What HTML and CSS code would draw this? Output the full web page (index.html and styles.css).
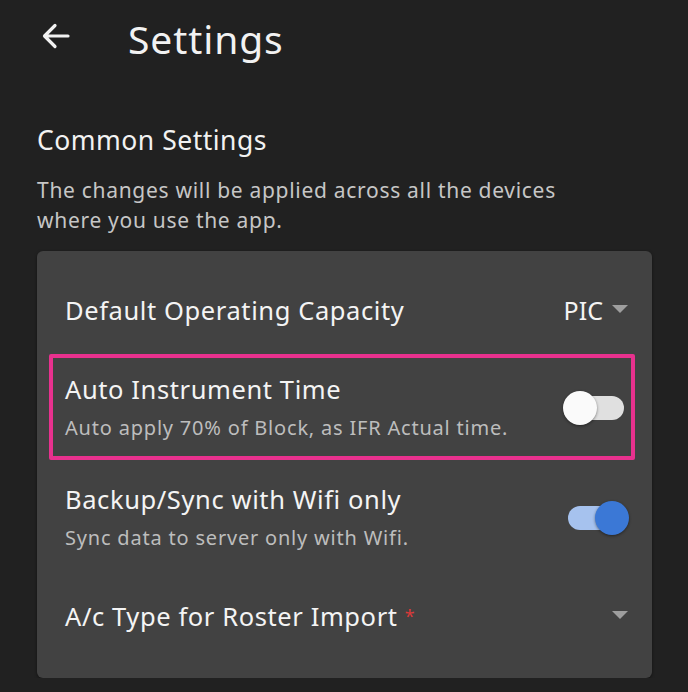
FILE: index.html
```html
<!DOCTYPE html>
<html lang="en">

<head>
    <meta charset="UTF-8">
    <meta name="viewport" content="width=device-width, initial-scale=1.0">
    <title>Settings</title>
    <link rel="stylesheet" href="styles.css">
</head>

<body>

    <!-- Top Bar -->
    <div class="top-bar">
        <svg class="back-icon" width="28" height="26" viewBox="0 0 28 26">
            <path d="M26 13 H3 M13 2.5 L2.5 13 L13 23.5" fill="none" stroke="#f2f2f2" stroke-width="3.2" stroke-linecap="round" stroke-linejoin="round"/>
        </svg>
        <h1>Settings</h1>
    </div>

    <!-- Common Settings -->
    <div class="section">
        <h2>Common Settings</h2>
        <p class="section-note">The changes will be applied across all the devices where you use the app.</p>

        <div class="card">
            <div class="row row-first">
                <span class="row-title">Default Operating Capacity</span>
                <span class="select">PIC <span class="caret"></span></span>
            </div>

            <div class="row row-highlight">
                <div class="row-text">
                    <div class="row-title">Auto Instrument Time</div>
                    <div class="row-sub">Auto apply 70% of Block, as IFR Actual time.</div>
                </div>
                <span class="toggle"><span class="knob"></span></span>
            </div>

            <div class="row row-sync">
                <div class="row-text">
                    <div class="row-title">Backup/Sync with Wifi only</div>
                    <div class="row-sub">Sync data to server only with Wifi.</div>
                </div>
                <span class="toggle on"><span class="knob"></span></span>
            </div>

            <div class="row row-last">
                <span class="row-title">A/c Type for Roster Import <span class="required">*</span></span>
                <span class="select"><span class="caret"></span></span>
            </div>
        </div>
    </div>

</body>

</html>
```

FILE: styles.css
```css
body {
    font-family: "Noto Sans", "Open Sans", sans-serif;
    background-color: #212121;
    color: #f2f2f2;
    margin: 0;
    padding: 0;
}

/* Top Bar */
.top-bar {
    display: flex;
    align-items: center;
    height: 78px;
    padding-left: 42px;
}

.back-icon {
    margin-top: -6px;
}

.top-bar h1 {
    margin: -2px 0 0 58px;
    font-size: 39px;
    font-weight: normal;
    letter-spacing: 0.9px;
    line-height: 1;
}

/* Section */
.section {
    padding: 42px 36px 0 37px;
}

.section h2 {
    margin: 0;
    font-size: 26.5px;
    font-weight: normal;
    letter-spacing: 0.5px;
    line-height: 40px;
}

.section-note {
    max-width: 570px;
    margin: 15px 0 16px;
    font-size: 21px;
    letter-spacing: 0.7px;
    line-height: 30px;
    color: #c6c6c6;
}

.card {
    background: #424242;
    border-radius: 6px;
    padding: 41px 0 44px;
    box-shadow: 0 1px 3px rgba(0, 0, 0, 0.5);
}

.row {
    display: flex;
    align-items: center;
    justify-content: space-between;
    padding: 0 24px 0 28px;
}

.row-title {
    font-size: 25.5px;
    letter-spacing: 0.6px;
    line-height: 32px;
    color: #f4f4f4;
}

.row-first,
.row-last {
    height: 36px;
}

.row-first {
    margin-bottom: 26px;
}

.row-highlight {
    margin: 0 17px 0 12px;
    border: 4px solid #e8318e;
    border-radius: 2px;
    padding: 15px 7px 14px 12px;
}

.row-sync {
    margin-top: 23px;
}

.row-last {
    margin-top: 46px;
}

.row-sub {
    margin-top: 9px;
    font-size: 20px;
    letter-spacing: 0.8px;
    line-height: 28px;
    color: #bdbdbd;
}

.select {
    display: flex;
    align-items: center;
    font-size: 25px;
    color: #f4f4f4;
}

.caret {
    display: inline-block;
    width: 0;
    height: 0;
    margin-left: 9px;
    border-left: 8px solid transparent;
    border-right: 8px solid transparent;
    border-top: 8px solid #9e9e9e;
    margin-top: -2px;
}

.required {
    color: #d93a3a;
    font-size: 18px;
    vertical-align: top;
}

/* Toggle */
.toggle {
    position: relative;
    display: inline-block;
    width: 60px;
    height: 24px;
    border-radius: 12px;
    background: #e0e0e0;
}

.toggle .knob {
    position: absolute;
    top: -5px;
    left: -1px;
    width: 34px;
    height: 34px;
    border-radius: 50%;
    background: #fafafa;
    box-shadow: 0 1px 3px rgba(0, 0, 0, 0.45);
}

.toggle.on {
    background: #a6c2ee;
}

.toggle.on .knob {
    left: auto;
    right: -1px;
    background: #3b78d6;
}
```
